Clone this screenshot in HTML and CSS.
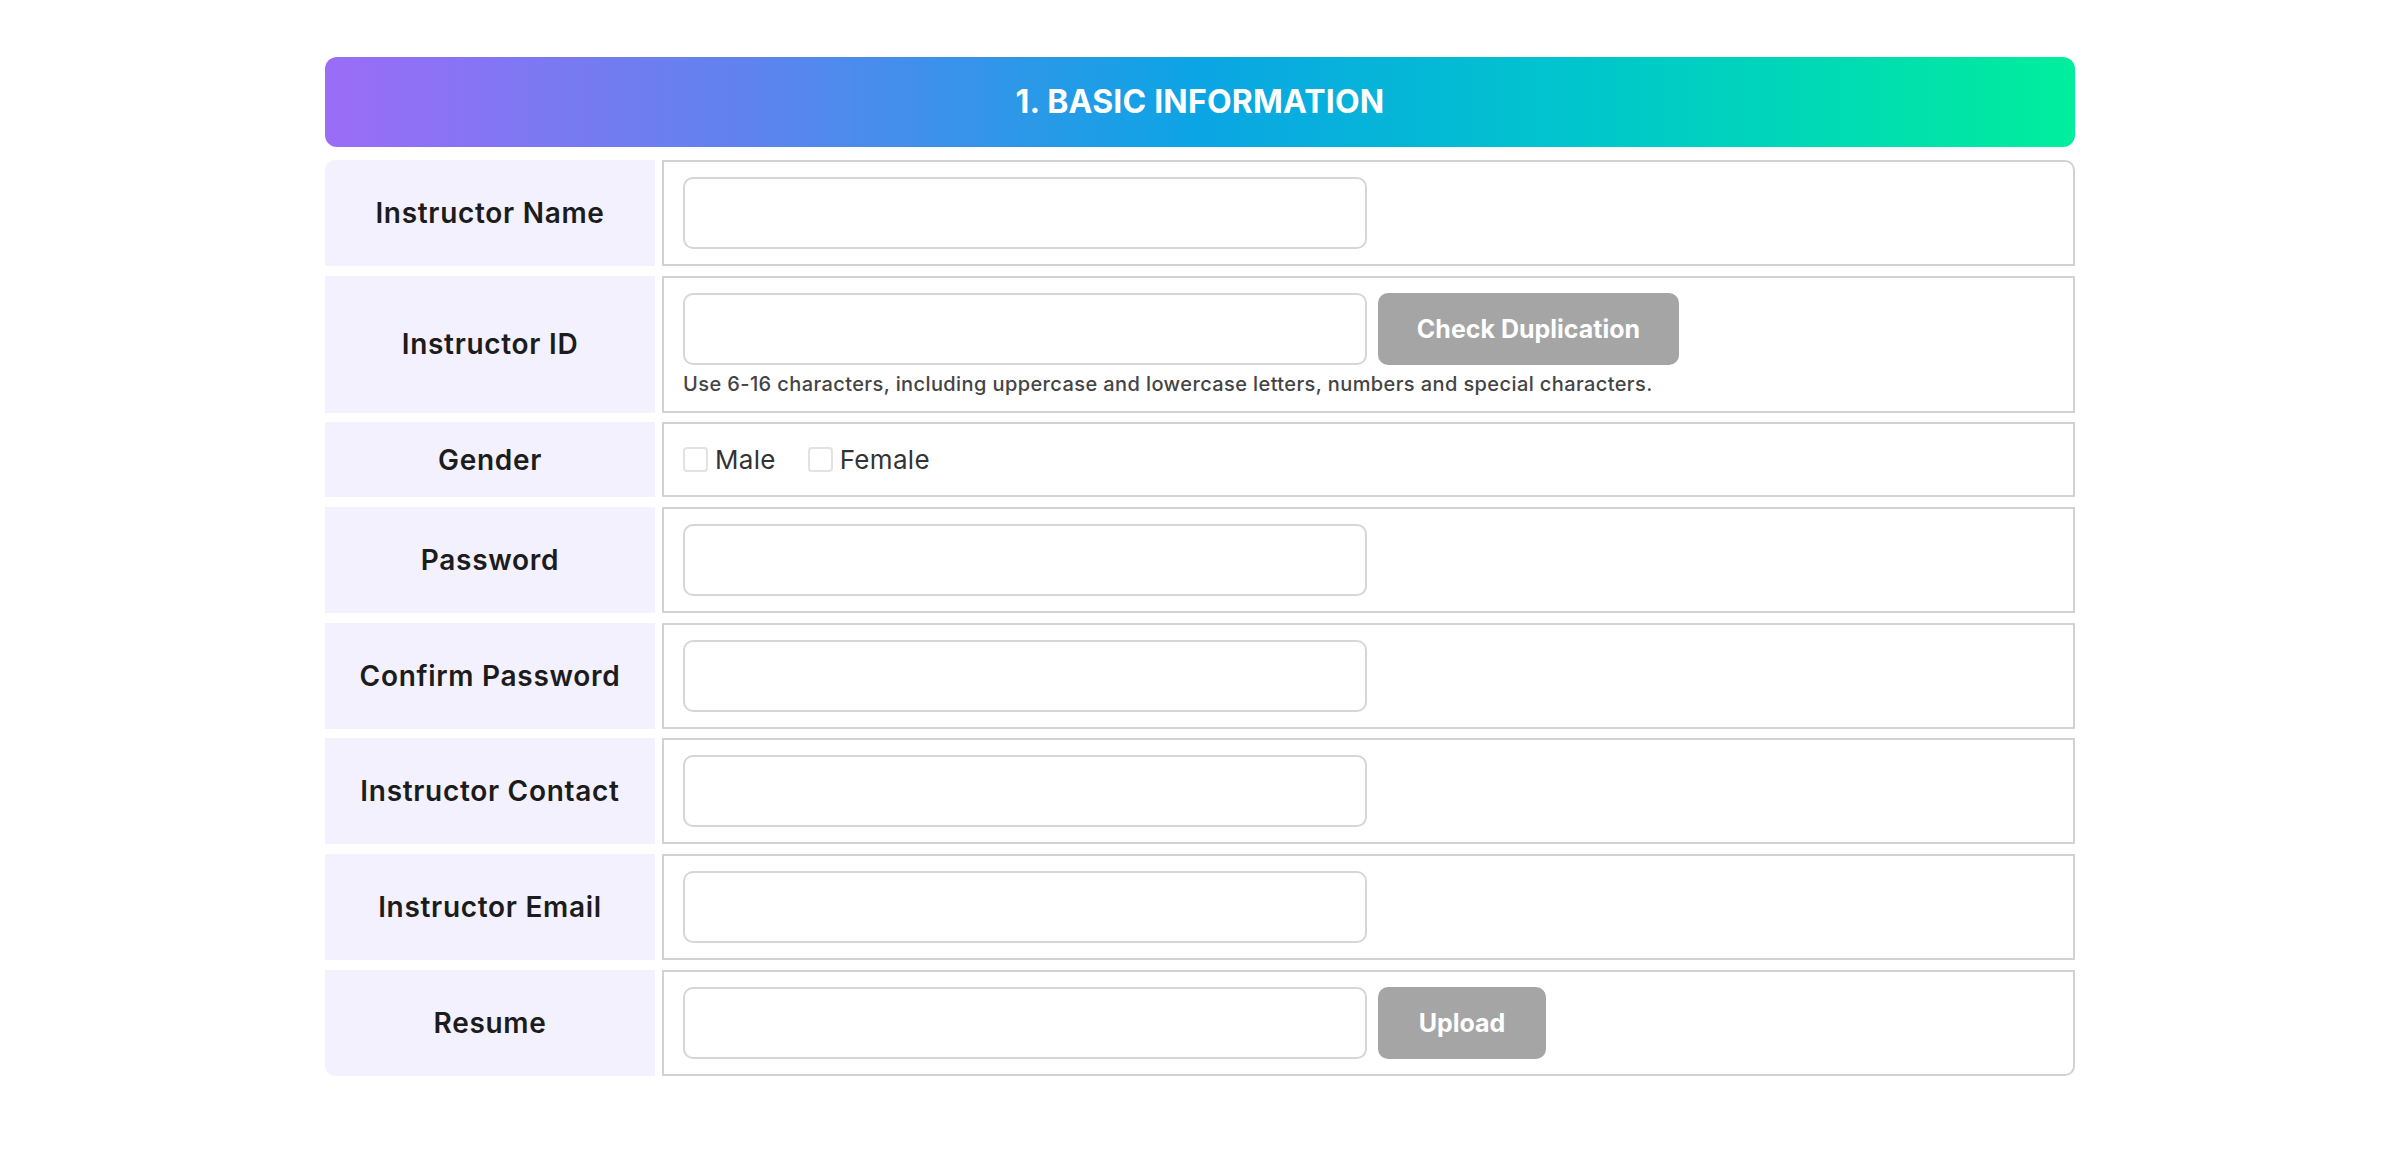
FILE: index.html
```html
<!DOCTYPE html>
<html lang="en">
<head>
<meta charset="utf-8">
<title>Basic Information</title>
<link rel="stylesheet" href="styles.css">
</head>
<body>
<main class="page">
  <section class="form-section">
    <h2 class="section-title">1. BASIC INFORMATION</h2>
    <div class="form-table">
      <div class="row row-first">
        <div class="label">Instructor Name</div>
        <div class="field"><input class="text-input" type="text"></div>
      </div>
      <div class="row">
        <div class="label">Instructor ID</div>
        <div class="field">
          <div class="input-line">
            <input class="text-input" type="text">
            <button class="btn btn-check" type="button">Check Duplication</button>
          </div>
          <p class="hint">Use 6-16 characters, including uppercase and lowercase letters, numbers and special characters.</p>
        </div>
      </div>
      <div class="row">
        <div class="label">Gender</div>
        <div class="field field-gender">
          <label class="choice"><input class="check" type="checkbox"><span>Male</span></label>
          <label class="choice"><input class="check" type="checkbox"><span>Female</span></label>
        </div>
      </div>
      <div class="row">
        <div class="label">Password</div>
        <div class="field"><input class="text-input" type="password"></div>
      </div>
      <div class="row">
        <div class="label">Confirm Password</div>
        <div class="field"><input class="text-input" type="password"></div>
      </div>
      <div class="row">
        <div class="label">Instructor Contact</div>
        <div class="field"><input class="text-input" type="text"></div>
      </div>
      <div class="row">
        <div class="label">Instructor Email</div>
        <div class="field"><input class="text-input" type="text"></div>
      </div>
      <div class="row row-last">
        <div class="label">Resume</div>
        <div class="field">
          <div class="input-line">
            <input class="text-input" type="text">
            <button class="btn btn-upload" type="button">Upload</button>
          </div>
        </div>
      </div>
    </div>
  </section>
</main>
</body>
</html>
```
FILE: styles.css
```css
* { box-sizing: border-box; }

html, body {
  margin: 0;
  padding: 0;
  background: #ffffff;
}

body {
  font-family: Inter, "Open Sans", "Liberation Sans", sans-serif;
  color: #1f1f1f;
}

.page {
  padding-top: 57px;
}

.form-section {
  width: 1750px;
  margin: 0 auto;
}

.section-title {
  margin: 0 0 13px 0;
  height: 90px;
  line-height: 90px;
  border-radius: 12px;
  background: linear-gradient(90deg, #9b6cf7 0%, #5d84ee 25%, #0ba5e4 50%, #00c6cc 72%, #00ee9c 100%);
  color: #ffffff;
  text-align: center;
  font-size: 32px;
  font-weight: 700;
  letter-spacing: 0.2px;
}

.form-table {
  display: flex;
  flex-direction: column;
  gap: 9.7px;
}

.row {
  display: grid;
  grid-template-columns: 330px 1fr;
  column-gap: 7px;
}

.label {
  background: #f3f1fd;
  display: flex;
  align-items: center;
  justify-content: center;
  font-size: 28px;
  font-weight: 600;
  letter-spacing: 0.7px;
  color: #1c1c1c;
}

.field {
  border: 2px solid #d2d2d2;
  padding: 15px 19px;
  background: #ffffff;
}

.row-first .label { border-top-left-radius: 10px; }
.row-first .field { border-top-right-radius: 10px; }
.row-last .label { border-bottom-left-radius: 10px; }
.row-last .field { border-bottom-right-radius: 10px; }

.text-input {
  display: block;
  width: 684px;
  height: 72px;
  border: 2px solid #d6d6d6;
  border-radius: 10px;
  background: #ffffff;
  margin: 0;
  padding: 0 16px;
  font-family: inherit;
  font-size: 22px;
  outline: none;
}

.input-line {
  display: flex;
  align-items: center;
  gap: 11px;
}

.btn {
  height: 72px;
  border: none;
  border-radius: 10px;
  background: #a5a5a5;
  color: #ffffff;
  font-family: inherit;
  font-size: 25px;
  font-weight: 700;
  margin: 0;
  padding: 0;
}

.btn-check { width: 301px; }
.btn-upload { width: 168px; }

.hint {
  margin: 7px 0 0 0;
  font-size: 20px;
  line-height: 24px;
  font-weight: 500;
  letter-spacing: 0.4px;
  color: #444444;
}

.field-gender {
  display: flex;
  align-items: center;
  gap: 32px;
  height: 75px;
}

.choice {
  display: flex;
  align-items: center;
  gap: 7px;
  font-size: 26px;
  font-weight: 400;
  letter-spacing: 0.3px;
  color: #333333;
  line-height: 42px;
}

.check {
  appearance: none;
  -webkit-appearance: none;
  margin: 0;
  width: 25px;
  height: 25px;
  border: 2px solid #e2e2e2;
  border-radius: 4px;
  background: #ffffff;
}
```
